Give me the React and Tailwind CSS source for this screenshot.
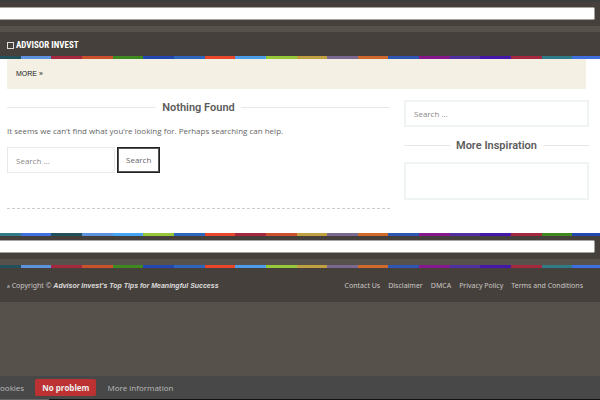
import React from "react";

const TOP = ["bg-[#24505c] flex-[21]", "bg-[#5c93dc]", "bg-[#a5283f]", "bg-[#cb512c]", "bg-[#3f8a20]", "bg-[#2347b0]", "bg-[#2e66be]", "bg-[#e8472c]", "bg-[#4c9eea]", "bg-[#96c83a]", "bg-[#c0a040]", "bg-[#7b6890]", "bg-[#cf6a2c]", "bg-[#3056b4]", "bg-[#84188c]", "bg-[#5030a0]", "bg-[#4518ac]", "bg-[#a5283f]", "bg-[#2f7c88]", "bg-[#3f6fe0] flex-[28]"];
const MIDDLE = ["bg-[#2f7c88] flex-[21]", "bg-[#3f6fe0]", "bg-[#24505c]", "bg-[#5c93dc]", "bg-[#46a4f4]", "bg-[#96c83a]", "bg-[#2e66be]", "bg-[#e8472c]", "bg-[#a5283f]", "bg-[#cb512c]", "bg-[#c0a040]", "bg-[#7b6890]", "bg-[#cf6a2c]", "bg-[#3056b4]", "bg-[#84188c]", "bg-[#5030a0]", "bg-[#4518ac]", "bg-[#a5283f]", "bg-[#3f8a20]", "bg-[#2347b0] flex-[28]"];

function Stripe({ colors }) {
  return (
    <div className="flex h-[3px]" aria-hidden="true">
      {colors.map((c, i) => (
        <span key={i} className={c.includes("flex-") ? c : "flex-[31] " + c} />
      ))}
    </div>
  );
}

function Slot() {
  return <div className="mr-[5px] h-[13px] rounded-r-xs border-y border-r border-[#a5a39e] bg-white" />;
}

function Heading({ children }) {
  return (
    <div className="flex items-center gap-[6px]">
      <span className="h-px flex-1 bg-[#e6e8e8]" />
      <h2 className="pt-px font-[Roboto,'Liberation_Sans',sans-serif] text-[11px] leading-[13px] font-semibold text-[#5c5c5c]">{children}</h2>
      <span className="h-px flex-1 bg-[#e6e8e8]" />
    </div>
  );
}

const LINKS = ["Contact Us", "Disclaimer", "DMCA", "Privacy Policy", "Terms and Conditions"];

export default function App() {
  return (
    <div className="flex min-h-screen flex-col bg-[#56514a] font-['Open_Sans',sans-serif] text-[8px] leading-[12px] text-[#666]">
      <div className="border-t-2 border-[#3e3e3e] bg-[#46403c] pt-[5px] pb-[6px]">
        <Slot />
      </div>
      <header className="mt-[6px] flex h-6 items-center gap-[2px] bg-[#46403c] pt-[2px] pl-[7px] text-white">
        <span className="size-[7px] border border-[#ddd]" />
        <a href="#home" className="font-['Liberation_Sans_Narrow','Roboto_Condensed','Liberation_Sans',sans-serif] text-[9px] leading-[12px] font-bold">ADVISOR INVEST</a>
      </header>
      <Stripe colors={TOP} />

      <div className="bg-white pb-6 pl-[7px]">
        <nav className="mr-[14px] bg-[#f4f0e4] px-[9px] py-[9px] font-['Liberation_Sans',Arial,sans-serif] text-[7px] leading-[12px] text-[#222]">
          <a href="#more">MORE »</a>
        </nav>
        <div className="mt-[11px] mr-[11px] flex gap-[14px]">
          <main className="flex-1 border-b border-dashed border-[#ccc]">
            <Heading>Nothing Found</Heading>
            <p className="mt-[11px]">It seems we can’t find what you’re looking for. Perhaps searching can help.</p>
            <form className="mt-[10px] flex gap-[2px]">
              <input type="search" aria-label="Search for" placeholder="Search …" className="h-[26px] w-[108px] border border-[#e8eaea] px-2 outline-none placeholder:text-[#888]" />
              <button type="button" className="h-[26px] border border-[#222] px-2 text-[#666] outline outline-1 -outline-offset-2 outline-[#555]">Search</button>
            </form>
          </main>
          <aside className="w-[185px] pb-[9px]">
            <input type="search" aria-label="Search the site" placeholder="Search …" className="block h-[27px] w-full border-2 border-[#f0f3f3] px-2 outline-none placeholder:text-[#888]" />
            <div className="mt-[11px]"><Heading>More Inspiration</Heading></div>
            <div className="mt-[10px] h-[38px] border-2 border-[#f0f3f3]" />
          </aside>
        </div>
      </div>

      <Stripe colors={MIDDLE} />
      <div className="bg-[#46403c] pt-1 pb-[6px]">
        <Slot />
      </div>
      <div className="h-[6px]" />
      <Stripe colors={TOP} />
      <footer className="flex items-center justify-between bg-[#46403c] pt-[13px] pr-[17px] pb-[11px] pl-[7px] text-[7px] leading-[10px] text-[#c8c6c4]">
        <p className="font-['Noto_Sans',sans-serif]">
          <span className="text-[5px]">a</span> Copyright © <em className="font-['Liberation_Sans',Arial,sans-serif] font-bold text-[#ddd]">Advisor Invest’s Top Tips for Meaningful Success</em>
        </p>
        <nav className="flex gap-2 font-['Noto_Sans',sans-serif]">
          {LINKS.map((l) => <a key={l} href="#footer">{l}</a>)}
        </nav>
      </footer>

      <div className="mt-auto bg-[#484848] text-[#bbb]">
        <div className="flex items-center gap-[11px] pt-[3px] pb-[3px]">
          <span>ookies</span>
          <button type="button" className="rounded-xs bg-[#bc3232] px-[7px] pt-[3px] pb-[2px] font-bold text-[#eee]">No problem</button>
          <a href="#info">More information</a>
        </div>
        <div className="h-px bg-[#111]"><div className="h-px w-[49px] bg-[#666]" /></div>
      </div>
    </div>
  );
}
